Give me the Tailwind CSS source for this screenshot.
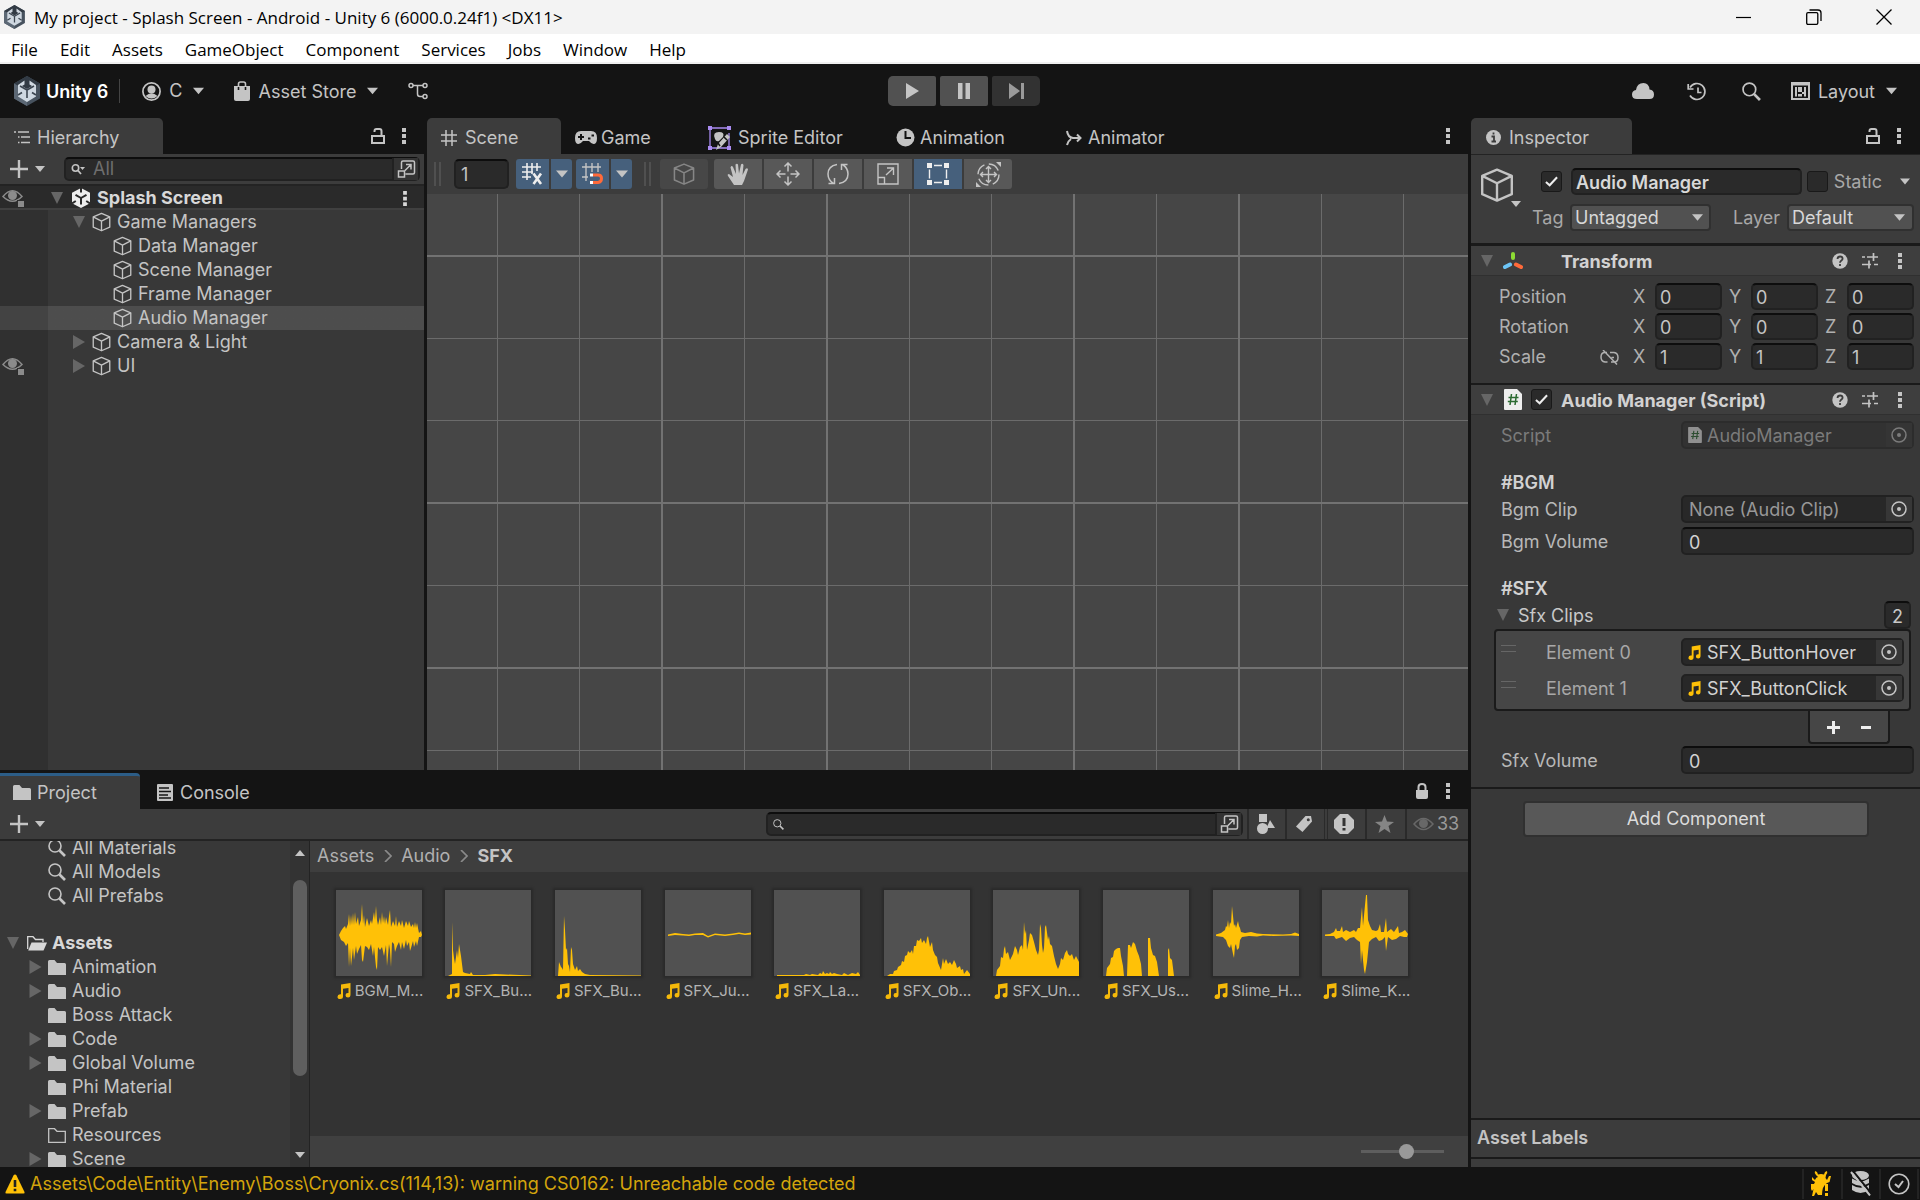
<!DOCTYPE html>
<html lang="en">
<head>
    <meta charset="UTF-8">
    <meta name="viewport" content="width=device-width, initial-scale=1.0">
    <title>My project - Splash Screen - Android - Unity 6</title>
    <script src="https://cdn.jsdelivr.net/npm/@tailwindcss/browser@4"></script>
</head>
<body class="h-screen flex flex-col overflow-hidden bg-[#141414] text-[#c4c4c4] text-[18px] leading-6 font-['Inter',sans-serif]">

    <!-- icon set -->
    <svg class="hidden">
        <symbol id="cube" viewBox="0 0 20 20"><path d="M10 1 18.7 4.6V15.4L10 19.2 1.3 15.4V4.6ZM1.3 4.6 10 9 18.7 4.6M10 9V19.2" fill="none" stroke="currentColor" stroke-width="1.4" stroke-linejoin="round"/></symbol>
        <symbol id="down" viewBox="0 0 10 6"><path d="M0 0H10L5 6Z" fill="currentColor"/></symbol>
        <symbol id="fold" viewBox="0 0 12 12"><path d="M0 0H12L6 12Z" fill="currentColor"/></symbol>
        <symbol id="unfold" viewBox="0 0 12 14"><path d="M0 0 12 7 0 14Z" fill="currentColor"/></symbol>
        <symbol id="dots" viewBox="0 0 4 16"><path d="M0 0H4V4H0ZM0 6H4V10H0ZM0 12H4V16H0Z" fill="currentColor"/></symbol>
        <symbol id="plus" viewBox="0 0 18 18"><path d="M9 0V18M0 9H18" stroke="currentColor" stroke-width="2.4"/></symbol>
        <symbol id="unlock" viewBox="0 0 14 16"><path d="M1 8H13V15H1ZM3.5 4V3Q3.5 1 5.5 1H8.5Q10.5 1 10.5 3V8" fill="none" stroke="currentColor" stroke-width="2"/></symbol>
        <symbol id="lock" viewBox="0 0 14 16"><path d="M1 7H13V14Q13 16 11 16H3Q1 16 1 14Z" fill="currentColor"/><path d="M3.5 8V4Q3.5 1 7 1T10.5 4V8" fill="none" stroke="currentColor" stroke-width="2"/></symbol>
        <symbol id="search" viewBox="0 0 18 18"><circle cx="7" cy="7" r="6" fill="none" stroke="currentColor" stroke-width="1.6"/><path d="M11.5 11.5 17 17" stroke="currentColor" stroke-width="2.6"/></symbol>
        <symbol id="popout" viewBox="0 0 18 18"><path d="M4 9V2.500Q4 1 5.500 1H15.500Q17 1 17 2.500V12.500Q17 14 15.500 14H8M1 11H7V17H1ZM7.500 10.500 13 5M8.500 4.500H13.500V9.500" fill="none" stroke="currentColor" stroke-width="1.5"/></symbol>
        <symbol id="eye" viewBox="0 0 22 18"><path d="M1 7.500Q10.500-4 20 7.500 10.500 17 1 7.500Z" fill="none" stroke="currentColor" stroke-width="1.5"/><circle cx="10.500" cy="6.500" r="4.500" fill="currentColor"/><path d="M15 11H22V18H15Z" fill="#2c2c2c"/><path d="M16 12H22V18H16Z" fill="currentColor"/></symbol>
        <symbol id="folder" viewBox="0 0 18 15"><path d="M0 1.500Q0 0 1.500 0H6.500L9 3H16.500Q18 3 18 4.500V15H0Z" fill="currentColor"/></symbol>
        <symbol id="folder-empty" viewBox="0 0 18 15"><path d="M.7 14.300V.7H6.500L9 3.300H17.300V14.300Z" fill="none" stroke="currentColor" stroke-width="1.300"/></symbol>
        <symbol id="note" viewBox="0 0 14 16"><path d="M4 1.500 13.500 0V11.500Q13.500 14.500 11 14.500T8.500 12.200 11 10H11.500V5L6 5.800V13.500Q6 16 3.200 16T.5 13.700 3 11.300H4Z" fill="currentColor"/></symbol>
        <symbol id="target" viewBox="0 0 16 16"><circle cx="8" cy="8" r="7" fill="none" stroke="currentColor" stroke-width="1.500"/><circle cx="8" cy="8" r="2" fill="currentColor"/></symbol>
        <symbol id="help" viewBox="0 0 16 16"><circle cx="8" cy="8" r="7.700" fill="currentColor"/><path d="M5.500 6Q5.700 3.500 8.100 3.500T10.600 5.700C10.600 7.500 8 7.500 8 9.700M8 11V13" fill="none" stroke="#3c3c3c" stroke-width="1.800"/></symbol>
        <symbol id="preset" viewBox="0 0 16 16"><path d="M0 4H3M5 4H16M11.500 0V8M0 11.500H9M12 11.500H16M7 7.500V15.500" stroke="currentColor" stroke-width="1.700"/></symbol>
        <symbol id="check" viewBox="0 0 14 11"><path d="M1 6 5 9.500 13 1" fill="none" stroke="#eee" stroke-width="2.200"/></symbol>
        <symbol id="hash-file" viewBox="0 0 18 21"><path d="M0 1Q0 0 1 0H13L18 5V20Q18 21 17 21H1Q0 21 0 20Z" fill="#eee"/><path d="M7.500 5 6 16M12.500 5 11 16M4.500 8.500H14.500M3.800 12.500H13.800" stroke="#2c6b32" stroke-width="1.500"/></symbol>
        <symbol id="unity" viewBox="0 0 18 20"><path d="M9 0 18 4.800V15.200L9 20 0 15.200V4.800Z" fill="#eee"/><path d="M9 10V16.500M9 10 3.500 6.800M9 10 14.500 6.800M9 0V4.500M0 15.500 3.800 13M18 15.500 14.200 13" stroke="#2a2a2a" stroke-width="2"/></symbol>
        <symbol id="unity-hex" viewBox="0 0 26 30"><path d="M13 0 26 7.500V22.500L13 30 0 22.500V7.500Z" fill="#47525e"/><path d="M13 0 26 7.500 13 15 0 7.500Z" fill="#323b45"/><path d="M13 15V30L0 22.500V7.500Z" fill="#5c6875"/><path d="M10.500 4.500 4 9V20.500L13 26 22 20.500V9L15.500 4.500V8.500L18 10 13 13 8 10 10.500 8.500Z" fill="#cfd8e1"/><path d="M13 13V22M13 14 6 10M13 14 20 10M4 19 8 16.500M22 19 18 16.500" stroke="#3b4550" stroke-width="1.600"/></symbol>
    </svg>

    <!-- window title bar -->
    <header class="h-[34px] shrink-0 flex items-center bg-[#f3f3f3] text-black pl-[4px] pr-[28px] font-['Open_Sans',sans-serif] text-[17px]">
        <svg class="w-[21px] h-[24px] mr-[9px]"><use href="#unity-hex"/></svg>
        <span class="pt-px">My project - Splash Screen - Android - Unity 6 (6000.0.24f1) &lt;DX11&gt;</span>
        <div class="ml-auto flex items-center gap-[54px]">
            <button aria-label="Minimize"><svg class="w-4 h-4" viewBox="0 0 16 16"><path d="M0 8.500H15" stroke="#000" stroke-width="1.200"/></svg></button>
            <button aria-label="Restore"><svg class="w-4 h-4" viewBox="0 0 16 16"><path d="M.7 5Q.7 3.700 2 3.700H10.500Q11.800 3.700 11.800 5V14Q11.800 15.300 10.500 15.300H2Q.7 15.300.7 14ZM3.500 1H12Q15 1 15 4V12" fill="none" stroke="#000" stroke-width="1.300"/></svg></button>
            <button aria-label="Close"><svg class="w-4 h-4" viewBox="0 0 16 16"><path d="M.5.5 15.500 15.500M15.500.5.5 15.500" stroke="#000" stroke-width="1.300"/></svg></button>
        </div>
    </header>
    <nav class="h-[30px] shrink-0 flex items-center gap-[22px] pl-[11px] pt-[3px] bg-white border-b-2 border-[#f0f0f0] text-black font-['Open_Sans',sans-serif] text-[17px]">
        <button>File</button>
        <button>Edit</button>
        <button>Assets</button>
        <button>GameObject</button>
        <button>Component</button>
        <button>Services</button>
        <button>Jobs</button>
        <button>Window</button>
        <button>Help</button>
    </nav>

    <!-- main toolbar -->
    <div class="h-[54px] shrink-0 grid grid-cols-[1fr_auto_1fr] items-center pl-[14px] pr-[6px]">
        <div class="flex items-center">
            <svg class="w-[26px] h-[30px]"><use href="#unity-hex"/></svg>
            <span class="ml-[6px] pt-px font-semibold text-white">Unity 6</span>
            <div class="w-px h-6 bg-[#444] ml-[11px] mr-[22px]"></div>
            <button class="flex items-center">
                <svg class="w-[19px] h-[19px] mr-[8px]" viewBox="0 0 19 19"><circle cx="9.500" cy="9.500" r="8.600" fill="none" stroke="currentColor" stroke-width="1.700"/><circle cx="9.500" cy="7.500" r="4" fill="currentColor"/><path d="M3.500 14Q9.500 8.500 15.500 14 9.500 19 3.500 14Z" fill="currentColor"/></svg>
                C
                <svg class="w-[11px] h-[8px] ml-[10px]"><use href="#down"/></svg>
            </button>
            <button class="flex items-center ml-[30px]">
                <svg class="w-[16px] h-[20px] mr-[9px]" viewBox="0 0 16 20"><path d="M0 5H16V18Q16 20 14 20H2Q0 20 0 18Z" fill="currentColor"/><path d="M4.500 9V3Q4.500 1 6.500 1H9.500Q11.500 1 11.500 3V9" fill="none" stroke="currentColor" stroke-width="1.600"/><path d="M4.500 6V9M11.500 6V9" stroke="#141414" stroke-width="1.600"/></svg>
                <span class="pt-px">Asset Store</span>
                <svg class="w-[11px] h-[8px] ml-[11px]"><use href="#down"/></svg>
            </button>
            <button aria-label="Version control" class="ml-[30px]"><svg class="w-[20px] h-[18px]" viewBox="0 0 20 18"><g fill="none" stroke="currentColor" stroke-width="1.500"><circle cx="3" cy="3.500" r="2"/><circle cx="17" cy="3.500" r="2"/><circle cx="17" cy="14.500" r="2"/><path d="M5 3.500H15M9.500 3.500V12Q9.500 14.500 12 14.500H15"/></g></svg></button>
        </div>
        <div class="flex gap-[4px]">
            <button aria-label="Play" class="w-[48px] h-[30px] flex items-center justify-center bg-[#515151] rounded-l-[5px] rounded-r-[2px]"><svg class="w-[13px] h-[16px]" viewBox="0 0 13 16"><path d="M0 0 13 8 0 16Z" fill="currentColor"/></svg></button>
            <button aria-label="Pause" class="w-[48px] h-[30px] flex items-center justify-center bg-[#515151] rounded-[2px]"><svg class="w-[12px] h-[16px]" viewBox="0 0 12 16"><path d="M0 0H4.500V16H0ZM7.500 0H12V16H7.500Z" fill="currentColor"/></svg></button>
            <button aria-label="Step" class="w-[48px] h-[30px] flex items-center justify-center bg-[#323232] text-[#9a9a9a] rounded-l-[2px] rounded-r-[5px]"><svg class="w-[15px] h-[16px]" viewBox="0 0 15 16"><path d="M0 0 11 8 0 16ZM12 0H15V16H12Z" fill="currentColor"/></svg></button>
        </div>
        <div class="flex items-center justify-end pr-[17px]">
            <button aria-label="Cloud"><svg class="w-[22px] h-[16px]" viewBox="0 0 22 16"><path d="M5 16Q0 16 0 11.500 0 7.500 4 7 5 0 11.500 0 17 0 17.500 6.500 22 7 22 11.500 22 16 17.500 16Z" fill="currentColor"/></svg></button>
            <button aria-label="Undo history" class="ml-[33px]"><svg class="w-[20px] h-[19px]" viewBox="0 0 20 19"><path d="M3 5.500A8 8 0 1 1 3 13.500M1.200 2V7H6.500M11 5.500V10.500H14.500" fill="none" stroke="currentColor" stroke-width="1.700"/></svg></button>
            <button aria-label="Search" class="ml-[35px]"><svg class="w-[19px] h-[19px]"><use href="#search"/></svg></button>
            <button class="flex items-center ml-[30px]">
                <svg class="w-[19px] h-[18px] mr-[8px]" viewBox="0 0 19 18"><path d="M0 0H19V18H0Z" fill="currentColor"/><path d="M2 3.500H17V16H2Z" fill="#141414"/><path d="M4 5H6V14.500H4ZM7 5H11V10H7ZM7 12H11V14.500H7ZM13 5H15V14.500H13ZM11 10H13V12H11Z" fill="currentColor"/></svg>
                <span class="pt-px">Layout</span>
                <svg class="w-[11px] h-[8px] ml-[11px]"><use href="#down"/></svg>
            </button>
        </div>
    </div>

    <main class="flex-1 min-h-0 flex gap-[3px]">
        <div class="flex-1 min-w-0 flex flex-col">
            <div class="flex-1 min-h-0 flex gap-[3px]">

                <!-- hierarchy -->
                <section class="w-[424px] shrink-0 flex flex-col">
                    <div class="h-[36px] shrink-0 flex items-center">
                        <button class="w-[163px] h-[36px] flex items-center pl-[14px] pt-[3px] gap-[7px] bg-[#3c3c3c] rounded-tr-[5px]">
                            <svg class="w-[16px] h-[13px]" viewBox="0 0 16 13"><path d="M0 1H2M4 1H15M4 6H5.500M7 6H16M4 11.500H5.500M7 11.500H16" stroke="currentColor" stroke-width="1.700"/></svg>
                            Hierarchy
                        </button>
                        <button aria-label="Lock" class="ml-auto"><svg class="w-[14px] h-[16px]"><use href="#unlock"/></svg></button>
                        <button aria-label="Menu" class="ml-[17px] mr-[18px]"><svg class="w-[4px] h-[16px]"><use href="#dots"/></svg></button>
                    </div>
                    <div class="h-[32px] shrink-0 flex items-center bg-[#3c3c3c] border-b-2 border-[#232323] pl-[10px] pr-[4px]">
                        <button aria-label="Create" class="flex items-center gap-[7px]"><svg class="w-[18px] h-[18px]"><use href="#plus"/></svg><svg class="w-[10px] h-[6px]"><use href="#down"/></svg></button>
                        <div class="ml-[19px] flex-1 h-[24px] flex items-center bg-[#2a2a2a] border-2 border-t-[#0d0d0d] border-[#212121] rounded-[5px]">
                            <svg class="w-[14px] h-[11px] ml-[5px]" viewBox="0 0 14 11"><circle cx="4.500" cy="4" r="3.200" fill="none" stroke="currentColor" stroke-width="1.600"/><path d="M7 6.500 10 10" stroke="currentColor" stroke-width="1.800"/><path d="M9 3H14L11.500 6Z" fill="currentColor"/></svg>
                            <input type="text" aria-label="Search hierarchy" placeholder="All" class="flex-1 min-w-0 ml-[8px] bg-transparent outline-none placeholder:text-[#6e6e6e]">
                            <button aria-label="Open search window" class="w-[26px] h-[22px] flex items-center justify-center bg-[#333] border-l-2 border-[#212121]"><svg class="w-[19px] h-[18px]"><use href="#popout"/></svg></button>
                        </div>
                    </div>
                    <div class="h-[24px] shrink-0 flex items-center bg-[#2a2a2a] border-b-2 border-[#404040] pl-[2px] pt-[2px] font-bold text-[#d8d8d8]">
                        <svg class="w-[22px] h-[18px] text-[#8b8b8b]"><use href="#eye"/></svg>
                        <svg class="w-[12px] h-[12px] ml-[27px] mr-[9px] text-[#666]"><use href="#fold"/></svg>
                        <svg class="w-[18px] h-[20px] mr-[7px]"><use href="#unity"/></svg>
                        Splash Screen
                        <svg class="w-[4px] h-[15px] ml-auto mr-[17px]"><use href="#dots"/></svg>
                    </div>
                    <div class="flex-1 min-h-0 bg-linear-to-r from-[#303030] from-[48px] to-[#383838] to-[48px]">
                        <ul>
                            <li class="h-[24px] flex items-center pl-[73px]"><svg class="w-[12px] h-[12px] mr-[7px] text-[#666]"><use href="#fold"/></svg><svg class="w-[19px] h-[20px] mr-[6px]"><use href="#cube"/></svg>Game Managers</li>
                            <li class="h-[24px] flex items-center pl-[113px]"><svg class="w-[19px] h-[20px] mr-[6px]"><use href="#cube"/></svg>Data Manager</li>
                            <li class="h-[24px] flex items-center pl-[113px]"><svg class="w-[19px] h-[20px] mr-[6px]"><use href="#cube"/></svg>Scene Manager</li>
                            <li class="h-[24px] flex items-center pl-[113px]"><svg class="w-[19px] h-[20px] mr-[6px]"><use href="#cube"/></svg>Frame Manager</li>
                            <li class="h-[24px] flex items-center pl-[113px] bg-linear-to-r from-[#434343] from-[48px] to-[#4d4d4d] to-[48px]"><svg class="w-[19px] h-[20px] mr-[6px]"><use href="#cube"/></svg>Audio Manager</li>
                            <li class="h-[24px] flex items-center pl-[73px]"><svg class="w-[12px] h-[14px] mr-[7px] text-[#666]"><use href="#unfold"/></svg><svg class="w-[19px] h-[20px] mr-[6px]"><use href="#cube"/></svg>Camera &amp; Light</li>
                            <li class="h-[24px] flex items-center pl-[2px]"><svg class="w-[22px] h-[18px] mr-[49px] text-[#8b8b8b]"><use href="#eye"/></svg><svg class="w-[12px] h-[14px] mr-[7px] text-[#666]"><use href="#unfold"/></svg><svg class="w-[19px] h-[20px] mr-[6px]"><use href="#cube"/></svg>UI</li>
                        </ul>
                    </div>
                </section>

                <!-- scene view -->
                <section class="flex-1 min-w-0 flex flex-col">
                    <div class="h-[36px] shrink-0 flex items-center">
                        <button class="w-[134px] h-[36px] flex items-center gap-[8px] pl-[14px] pt-[3px] bg-[#3c3c3c] rounded-t-[5px]"><svg class="w-[16px] h-[16px]" viewBox="0 0 16 16"><path d="M5 0V16M11 0V16M0 5H16M0 11H16" stroke="currentColor" stroke-width="1.500"/></svg>Scene</button>
                        <button class="w-[133px] h-[36px] flex items-center gap-[4px] pl-[14px] pt-[3px]"><svg class="w-[22px] h-[13px]" viewBox="0 0 22 13"><path d="M6 0H16Q22 0 22 7 22 13 18.500 13 16.500 13 14 10H8Q5.500 13 3.500 13 0 13 0 7 0 0 6 0Z" fill="currentColor"/><path d="M6 3V9M3 6H9M13 7.500H15.500M16.500 4.500H19" stroke="#141414" stroke-width="2"/></svg>Game</button>
                        <button class="w-[189px] h-[36px] flex items-center gap-[6px] pl-[13px] pt-[3px]"><svg class="w-[25px] h-[26px]" viewBox="0 0 25 26"><path d="M3 3H22M3 3V23M3 23H22M22 8V23" stroke="#a98bf0" stroke-width="1.300" fill="none"/><path d="M1 1H5V5H1ZM20 1H24V5H20ZM1 21H5V25H1ZM20 21H24V25H20Z" fill="#a98bf0"/><path d="M8 14Q5 7 12 7 18 7 16 12L12 16Q9 17 8 14ZM20 9 23 12 14 22 9 25 11 19Z" fill="currentColor"/><path d="M17 12 20 15M11 18 13 21" stroke="#141414" stroke-width="1.500"/></svg>Sprite Editor</button>
                        <button class="w-[169px] h-[36px] flex items-center gap-[5px] pl-[13px] pt-[3px]"><svg class="w-[19px] h-[19px]" viewBox="0 0 19 19"><circle cx="9.500" cy="9.500" r="9" fill="currentColor"/><path d="M9.500 3V10H15" fill="none" stroke="#141414" stroke-width="2"/></svg>Animation</button>
                        <button class="h-[36px] flex items-center gap-[6px] pl-[14px] pt-[3px]"><svg class="w-[16px] h-[16px]" viewBox="0 0 16 16"><path d="M1 1Q2 7.500 7 8H14M1 15Q2 11 5 9M11 4.500 14.500 8 11 11.500" fill="none" stroke="currentColor" stroke-width="2"/></svg>Animator</button>
                        <button aria-label="Menu" class="ml-auto mr-[18px]"><svg class="w-[4px] h-[16px]"><use href="#dots"/></svg></button>
                    </div>
                    <div class="h-[40px] shrink-0 flex items-center bg-[#3c3c3c] pl-[7px]">
                        <div class="w-[7px] h-[24px] border-x-2 border-[#505050]"></div>
                        <input type="text" aria-label="Grid size" value="1" class="w-[55px] h-[30px] ml-[13px] pl-[5px] pt-px bg-[#2a2a2a] border-2 border-[#212121] border-t-[#0d0d0d] rounded-[5px] outline-none">
                        <div class="flex gap-[2px] ml-[7px] text-[#eee]">
                            <button aria-label="Grid axis" class="w-[33px] h-[30px] flex items-center justify-center bg-[#46607c] rounded-l-[3px]"><svg class="w-[21px] h-[22px]" viewBox="0 0 21 22"><path d="M5 0V17M10 0V11M15 0V8M0 4H19M0 9H11M0 14H9" stroke="currentColor" stroke-width="1.600"/><path d="M11.500 10.500 19 21M19 10.500 11.500 21" stroke="currentColor" stroke-width="2.600"/></svg></button>
                            <button aria-label="Grid options" class="w-[21px] h-[30px] flex items-center justify-center bg-[#46607c] rounded-r-[3px] text-[#c4c4c4]"><svg class="w-[12px] h-[8px]"><use href="#down"/></svg></button>
                        </div>
                        <div class="flex gap-[2px] ml-[4px]">
                            <button aria-label="Snap" class="w-[33px] h-[30px] flex items-center justify-center bg-[#46607c] rounded-l-[3px]"><svg class="w-[21px] h-[22px]" viewBox="0 0 21 22"><path d="M4 0V18M10 0V9M16 0V9M0 4H19M0 14H6" stroke="currentColor" stroke-width="1.400"/><path d="M11 12H16Q19.500 12 19.500 15.500T16 19.500H11" fill="none" stroke="#ff6a3a" stroke-width="3"/><path d="M8 10.500H11V13.500H8ZM8 18H11V21H8Z" fill="#fff"/></svg></button>
                            <button aria-label="Snap options" class="w-[21px] h-[30px] flex items-center justify-center bg-[#46607c] rounded-r-[3px]"><svg class="w-[12px] h-[8px]"><use href="#down"/></svg></button>
                        </div>
                        <div class="w-[7px] h-[24px] ml-[12px] border-x-2 border-[#505050]"></div>
                        <button aria-label="View mode" class="w-[48px] h-[30px] ml-[9px] flex items-center justify-center bg-[#474747] text-[#868686] rounded-[3px]"><svg class="w-[22px] h-[22px]"><use href="#cube"/></svg></button>
                        <div class="flex gap-[2px] ml-[6px]">
                            <button aria-label="Hand" class="w-[48px] h-[30px] flex items-center justify-center bg-[#585858] rounded-l-[3px]"><svg class="w-[22px] h-[23px]" viewBox="0 0 22 23"><path d="M7 22 1 13Q0 11 2 11L6 14 3.500 4.500Q4.500 2 6 4L9 11 8.500 1.500Q10 0 11 1.500L12 10.500 14 1.500Q15.500 0 16.500 2L15.500 12 18.500 6Q20.500 4.500 21 6.500L17 18 15 22Z" fill="currentColor"/></svg></button>
                            <button aria-label="Move" class="w-[48px] h-[30px] flex items-center justify-center bg-[#585858]"><svg class="w-[24px] h-[24px]" viewBox="0 0 24 24"><path d="M12 1V9.500M12 14.500V23M1 12H9.500M14.500 12H23M8.500 4.500 12 1 15.500 4.500M8.500 19.500 12 23 15.500 19.500M4.500 8.500 1 12 4.500 15.500M19.500 8.500 23 12 19.500 15.500" fill="none" stroke="currentColor" stroke-width="1.500"/></svg></button>
                            <button aria-label="Rotate" class="w-[48px] h-[30px] flex items-center justify-center bg-[#585858]"><svg class="w-[22px] h-[22px]" viewBox="0 0 22 22"><path d="M10 1.500Q1 3 1 11 1 17 6.500 20.500M12 20.500Q21 19 21 11 21 5 15.500 1.500M7.500 15V20.500H1.500M14.500 7V1.500H20.500" fill="none" stroke="currentColor" stroke-width="1.500"/></svg></button>
                            <button aria-label="Scale" class="w-[48px] h-[30px] flex items-center justify-center bg-[#585858]"><svg class="w-[22px] h-[22px]" viewBox="0 0 22 22"><path d="M1 1H21V21H1ZM1 14.500H7.500V21M9 12 16 5.500M10 5H16.500V12" fill="none" stroke="currentColor" stroke-width="1.400"/></svg></button>
                            <button aria-label="Rect" class="w-[48px] h-[30px] flex items-center justify-center bg-[#46607c] text-[#eee]"><svg class="w-[22px] h-[22px]" viewBox="0 0 22 22"><path d="M7 2.500H15M7 19.500H15M2.500 6.500V15.500M19.500 6.500V15.500" stroke="currentColor" stroke-width="1.400"/><path d="M0 0H5V5H0ZM17 0H22V5H17ZM0 17H5V22H0ZM17 17H22V22H17Z" fill="currentColor"/></svg></button>
                            <button aria-label="Transform" class="w-[48px] h-[30px] flex items-center justify-center bg-[#585858] rounded-r-[3px]"><svg class="w-[25px] h-[25px]" viewBox="0 0 25 25"><g fill="none" stroke="currentColor" stroke-width="1.400"><circle cx="12.500" cy="12.500" r="10.500" stroke-dasharray="12 4.500"/><path d="M12.500 4.500V20.500M4.500 12.500H20.500M10 7 12.500 4.500 15 7M10 18 12.500 20.500 15 18M7 10 4.500 12.500 7 15M18 10 20.500 12.500 18 15"/></g><path d="M20 0H25V5ZM0 20V25H5Z" fill="currentColor"/></svg></button>
                        </div>
                    </div>
                    <div class="flex-1 min-h-0 bg-[#464646]">
                        <!-- scene grid: minor lines, then major ones -->
                        <svg class="w-full h-full" shape-rendering="crispEdges">
                            <path d="M70.500 0V2000M152.500 0V2000M317.500 0V2000M482.500 0V2000M564.500 0V2000M729.500 0V2000M894.500 0V2000M976.500 0V2000M0 144.500H4000M0 226.500H4000M0 391.500H4000M0 556.500H4000" stroke="#6b6b6b" stroke-width="1"/>
                            <path d="M235 0V2000M400 0V2000M647 0V2000M812 0V2000M0 62H4000M0 309H4000M0 474H4000" stroke="#727272" stroke-width="2"/>
                        </svg>
                    </div>
                </section>
            </div>

            <!-- project browser -->
            <section class="h-[397px] shrink-0 flex flex-col pt-[3px]">
                <div class="h-[36px] shrink-0 flex items-center">
                    <button class="w-[140px] h-[36px] flex items-center gap-[6px] pl-[13px] bg-[#3c3c3c] border-t-3 border-[#2c5d87] rounded-tr-[4px]"><svg class="w-[18px] h-[15px]"><use href="#folder"/></svg>Project</button>
                    <button class="h-[36px] flex items-center gap-[7px] pl-[17px] pt-[3px]"><svg class="w-[16px] h-[17px]" viewBox="0 0 16 17"><rect width="16" height="17" rx="1" fill="currentColor"/><path d="M2 4H12M2 7.500H14M2 11H11M2 14H14" stroke="#141414" stroke-width="1.400"/></svg>Console</button>
                    <button aria-label="Lock" class="ml-auto"><svg class="w-[14px] h-[16px]"><use href="#lock"/></svg></button>
                    <button aria-label="Menu" class="ml-[17px] mr-[18px]"><svg class="w-[4px] h-[16px]"><use href="#dots"/></svg></button>
                </div>
                <div class="h-[32px] shrink-0 flex items-center bg-[#3c3c3c] border-b-2 border-[#232323] pl-[10px]">
                    <button aria-label="Create" class="flex items-center gap-[7px]"><svg class="w-[18px] h-[18px]"><use href="#plus"/></svg><svg class="w-[10px] h-[6px]"><use href="#down"/></svg></button>
                    <div class="ml-auto w-[477px] h-[24px] flex items-center bg-[#2a2a2a] border-2 border-[#212121] border-t-[#0d0d0d] rounded-[5px]">
                        <svg class="w-[11px] h-[11px] ml-[5px]"><use href="#search"/></svg>
                        <input type="text" aria-label="Search project" class="flex-1 min-w-0 ml-[8px] bg-transparent outline-none">
                        <button aria-label="Open search window" class="w-[26px] h-[22px] flex items-center justify-center bg-[#333] border-l-2 border-[#212121]"><svg class="w-[19px] h-[18px]"><use href="#popout"/></svg></button>
                    </div>
                    <button aria-label="Search by type" class="w-[38px] h-[30px] ml-[4px] pr-[3px] flex items-center justify-center border-l-2 border-[#2a2a2a]"><svg class="w-[18px] h-[20px]" viewBox="0 0 18 20"><path d="M2 0H10V8H2ZM13 6 18 14H9.500Z" fill="currentColor"/><circle cx="5.500" cy="14.500" r="5.500" fill="currentColor"/></svg></button>
                    <button aria-label="Search by label" class="w-[39px] h-[30px] pr-[3px] flex items-center justify-center border-l-2 border-[#2a2a2a]"><svg class="w-[16px] h-[16px]" viewBox="0 0 16 16"><path d="M9.500 0H15L16 5.500 6.500 16 0 10.500Z" fill="currentColor"/><circle cx="12.300" cy="3.800" r="1.500" fill="#3c3c3c"/></svg></button>
                    <button aria-label="Log filter" class="w-[41px] h-[30px] pr-[5px] flex items-center justify-center border-l-4 border-double border-[#2a2a2a]"><svg class="w-[20px] h-[20px]" viewBox="0 0 20 20"><path d="M6 0H14L20 6V14L14 20H6L0 14V6Z" fill="currentColor"/><path d="M10 4V12M10 14V16.500" stroke="#333" stroke-width="3"/></svg></button>
                    <button aria-label="Favorites" class="w-[40px] h-[30px] pr-[3px] flex items-center justify-center border-l-2 border-[#2a2a2a] text-[#858585]"><svg class="w-[19px] h-[18px]" viewBox="0 0 19 18"><path d="M9.500 0 12 6.500 19 7 13.500 11 15.500 18 9.500 14 3.500 18 5.500 11 0 7 7 6.500Z" fill="currentColor"/></svg></button>
                    <button class="w-[63px] h-[30px] flex items-center pl-[6px] gap-[3px] border-l-2 border-[#2a2a2a] text-[#9a9a9a]"><svg class="w-[21px] h-[14px] text-[#686868]" viewBox="0 0 21 14"><path d="M1 7Q10.500-4 20 7 10.500 18 1 7Z" fill="none" stroke="currentColor" stroke-width="1.500"/><circle cx="10.500" cy="6.500" r="4.500" fill="currentColor"/></svg>33</button>
                </div>
                <div class="flex-1 min-h-0 flex">
                    <div class="w-[290px] shrink-0 overflow-hidden bg-[#383838]">
                        <ul class="-mt-[5px]">
                            <li class="h-[24px] flex items-center gap-[6px] pl-[48px]"><svg class="w-[18px] h-[18px]"><use href="#search"/></svg>All Materials</li>
                            <li class="h-[24px] flex items-center gap-[6px] pl-[48px]"><svg class="w-[18px] h-[18px]"><use href="#search"/></svg>All Models</li>
                            <li class="h-[24px] flex items-center gap-[6px] pl-[48px]"><svg class="w-[18px] h-[18px]"><use href="#search"/></svg>All Prefabs</li>
                        </ul>
                        <ul class="mt-[23px]">
                            <li class="h-[24px] flex items-center pl-[7px] font-bold text-[#d8d8d8]"><svg class="w-[12px] h-[12px] text-[#666]"><use href="#fold"/></svg><svg class="w-[20px] h-[15px] ml-[8px] mr-[5px]" viewBox="0 0 20 15"><path d="M.7 13V.7H6L8.500 3.500H16V6" fill="none" stroke="currentColor" stroke-width="1.300"/><path d="M4.500 6.500H20L16.500 14.500H1.200Z" fill="currentColor"/></svg>Assets</li>
                            <li class="h-[24px] flex items-center gap-[6px] pl-[29px]"><svg class="w-[13px] h-[14px] text-[#666]"><use href="#unfold"/></svg><svg class="w-[18px] h-[15px]"><use href="#folder"/></svg>Animation</li>
                            <li class="h-[24px] flex items-center gap-[6px] pl-[29px]"><svg class="w-[13px] h-[14px] text-[#666]"><use href="#unfold"/></svg><svg class="w-[18px] h-[15px]"><use href="#folder"/></svg>Audio</li>
                            <li class="h-[24px] flex items-center gap-[6px] pl-[48px]"><svg class="w-[18px] h-[15px]"><use href="#folder"/></svg>Boss Attack</li>
                            <li class="h-[24px] flex items-center gap-[6px] pl-[29px]"><svg class="w-[13px] h-[14px] text-[#666]"><use href="#unfold"/></svg><svg class="w-[18px] h-[15px]"><use href="#folder"/></svg>Code</li>
                            <li class="h-[24px] flex items-center gap-[6px] pl-[29px]"><svg class="w-[13px] h-[14px] text-[#666]"><use href="#unfold"/></svg><svg class="w-[18px] h-[15px]"><use href="#folder"/></svg>Global Volume</li>
                            <li class="h-[24px] flex items-center gap-[6px] pl-[48px]"><svg class="w-[18px] h-[15px]"><use href="#folder"/></svg>Phi Material</li>
                            <li class="h-[24px] flex items-center gap-[6px] pl-[29px]"><svg class="w-[13px] h-[14px] text-[#666]"><use href="#unfold"/></svg><svg class="w-[18px] h-[15px]"><use href="#folder"/></svg>Prefab</li>
                            <li class="h-[24px] flex items-center gap-[6px] pl-[48px]"><svg class="w-[18px] h-[15px]"><use href="#folder-empty"/></svg>Resources</li>
                            <li class="h-[24px] flex items-center gap-[6px] pl-[29px]"><svg class="w-[13px] h-[14px] text-[#666]"><use href="#unfold"/></svg><svg class="w-[18px] h-[15px]"><use href="#folder"/></svg>Scene</li>
                        </ul>
                    </div>
                    <div class="w-[20px] shrink-0 flex flex-col items-center bg-[#333] border-r border-[#232323] pt-[9px] pb-[9px]">
                        <svg class="w-[10px] h-[6px] rotate-180"><use href="#down"/></svg>
                        <div class="w-[14px] h-[196px] mt-[24px] rounded-full bg-[#5f5f5f]"></div>
                        <svg class="w-[10px] h-[6px] mt-auto"><use href="#down"/></svg>
                    </div>
                    <div class="flex-1 min-w-0 flex flex-col bg-[#333]">
                        <div class="h-[31px] shrink-0 flex items-center gap-[9px] pl-[7px] pb-[2px] bg-[#3e3e3e] text-[#b0b0b0]">
                            <a href="#">Assets</a>
                            <svg class="w-[9px] h-[12px]" viewBox="0 0 9 12"><path d="M2 0 8 6 2 12" fill="none" stroke="#8a8a8a" stroke-width="1.700"/></svg>
                            <a href="#">Audio</a>
                            <svg class="w-[9px] h-[12px]" viewBox="0 0 9 12"><path d="M2 0 8 6 2 12" fill="none" stroke="#8a8a8a" stroke-width="1.700"/></svg>
                            <a href="#" class="font-bold text-[#c4c4c4]">SFX</a>
                        </div>
                        <div id="clips" class="flex-1 min-h-0 grid grid-cols-10 content-start justify-items-center pl-[14px] pr-[48px] pt-[18px] text-[15px] leading-5 text-[#b4b4b4]"></div>
                        <div class="h-[31px] shrink-0 flex items-center justify-end pr-[24px] bg-[#404040]">
                            <input type="range" aria-label="Thumbnail size" value="56" class="w-[83px] h-[3px] appearance-none bg-[#5e5e5e] [&::-webkit-slider-thumb]:appearance-none [&::-webkit-slider-thumb]:w-[15px] [&::-webkit-slider-thumb]:h-[15px] [&::-webkit-slider-thumb]:rounded-full [&::-webkit-slider-thumb]:bg-[#999]">
                        </div>
                    </div>
                </div>
            </section>
        </div>

        <!-- inspector -->
        <section class="w-[449px] shrink-0 flex flex-col bg-[#383838]">
            <div class="h-[36px] shrink-0 flex items-center bg-[#141414]">
                <button class="w-[161px] h-[36px] flex items-center gap-[8px] pl-[15px] pt-[3px] bg-[#3c3c3c] rounded-t-[5px]"><svg class="w-[15px] h-[15px]" viewBox="0 0 15 15"><circle cx="7.500" cy="7.500" r="7.500" fill="currentColor"/><path d="M7.500 2.500V4.500M5.500 6.500H8V11M5.500 11.500H10" fill="none" stroke="#3c3c3c" stroke-width="1.800"/></svg>Inspector</button>
                <button aria-label="Lock" class="ml-auto"><svg class="w-[14px] h-[16px]"><use href="#unlock"/></svg></button>
                <button aria-label="Menu" class="ml-[17px] mr-[19px]"><svg class="w-[4px] h-[16px]"><use href="#dots"/></svg></button>
            </div>

            <div class="h-[92px] shrink-0 flex bg-[#3c3c3c] border-t border-[#232323] pt-[13px] border-b-3 border-b-[#1a1a1a]">
                <div class="w-[61px] shrink-0 flex flex-col items-center pr-[1px]">
                    <button aria-label="Select icon" class="relative mr-[9px]"><svg class="w-[34px] h-[34px]"><use href="#cube"/></svg><svg class="w-[10px] h-[6px] absolute left-[31px] top-[33px]"><use href="#down"/></svg></button>
                </div>
                <div class="flex-1 min-w-0 flex flex-col gap-[9px] pr-[6px] text-[#a8a8a8]">
                    <div class="flex items-center pl-[9px]">
                        <label class="flex w-[21px] h-[21px] shrink-0 items-center justify-center bg-[#2a2a2a] border border-[#191919] rounded-[3px]"><input type="checkbox" aria-label="Active" checked class="peer sr-only"><svg class="w-[13px] h-[11px] hidden peer-checked:block"><use href="#check"/></svg></label>
                        <input type="text" aria-label="Name" value="Audio Manager" class="flex-1 min-w-0 h-[27px] ml-[9px] mr-[5px] pl-[3px] pt-[2px] bg-[#2a2a2a] border-2 border-[#212121] border-t-[#0d0d0d] rounded-[5px] outline-none font-semibold text-[#d8d8d8]">
                        <label class="flex items-center gap-[6px]"><input type="checkbox" class="appearance-none w-[21px] h-[21px] bg-[#2a2a2a] border border-[#191919] rounded-[3px]">Static</label>
                        <button aria-label="Static flags" class="ml-[18px] mr-[4px] text-[#c4c4c4]"><svg class="w-[10px] h-[7px]"><use href="#down"/></svg></button>
                    </div>
                    <div class="flex items-center">
                        <label for="tag" class="w-[38px] shrink-0">Tag</label>
                        <div class="relative w-[141px] shrink-0">
                            <select id="tag" class="appearance-none w-full h-[27px] pl-[3px] bg-[#515151] border-2 border-[#303030] rounded-[4px] text-[#d8d8d8] leading-[22px]"><option>Untagged</option></select>
                            <svg class="w-[11px] h-[7px] absolute right-[8px] top-[10px] text-[#c4c4c4] pointer-events-none"><use href="#down"/></svg>
                        </div>
                        <label for="layer" class="w-[54px] shrink-0 ml-[22px]">Layer</label>
                        <div class="relative flex-1 min-w-0">
                            <select id="layer" class="appearance-none w-full h-[27px] pl-[3px] bg-[#515151] border-2 border-[#303030] rounded-[4px] text-[#d8d8d8] leading-[22px]"><option>Default</option></select>
                            <svg class="w-[11px] h-[7px] absolute right-[9px] top-[10px] text-[#c4c4c4] pointer-events-none"><use href="#down"/></svg>
                        </div>
                    </div>
                </div>
            </div>

            <div class="h-[30px] shrink-0 flex items-center bg-[#3e3e3e] border-b border-[#303030] pl-[10px]">
                <svg class="w-[12px] h-[12px] text-[#666]"><use href="#fold"/></svg>
                <svg class="w-[20px] h-[18px] ml-[10px]" viewBox="0 0 20 18"><g stroke-width="4" stroke-linecap="round"><path d="M10 2V6" stroke="#8ddb34"/><path d="M7 12.500 2 15" stroke="#6cc4f5"/><path d="M13 12.500 18 15" stroke="#ff6a3a"/></g></svg>
                <h2 class="ml-[38px] pt-[2px] font-bold text-[#d2d2d2]">Transform</h2>
                <button aria-label="Help" class="ml-auto"><svg class="w-[16px] h-[16px]"><use href="#help"/></svg></button>
                <button aria-label="Presets" class="ml-[14px]"><svg class="w-[16px] h-[16px]"><use href="#preset"/></svg></button>
                <button aria-label="Menu" class="ml-[20px] mr-[18px]"><svg class="w-[4px] h-[16px]"><use href="#dots"/></svg></button>
            </div>
            <div id="transform" class="shrink-0 flex flex-col gap-[3px] pt-[7px] pb-[13px] pl-[28px] pr-[6px] text-[#b0b0b0] border-b-2 border-[#1a1a1a]"></div>

            <div class="h-[30px] shrink-0 flex items-center bg-[#3e3e3e] border-b border-[#303030] pl-[10px]">
                <svg class="w-[12px] h-[12px] text-[#666]"><use href="#fold"/></svg>
                <svg class="w-[18px] h-[21px] ml-[11px] mr-[9px]"><use href="#hash-file"/></svg>
                <label class="flex w-[21px] h-[21px] items-center justify-center bg-[#2a2a2a] border border-[#191919] rounded-[3px]"><input type="checkbox" aria-label="Script enabled" checked class="peer sr-only"><svg class="w-[13px] h-[11px] hidden peer-checked:block"><use href="#check"/></svg></label>
                <h2 class="ml-[9px] pt-[2px] font-bold text-[#d2d2d2]">Audio Manager (Script)</h2>
                <button aria-label="Help" class="ml-auto"><svg class="w-[16px] h-[16px]"><use href="#help"/></svg></button>
                <button aria-label="Presets" class="ml-[14px]"><svg class="w-[16px] h-[16px]"><use href="#preset"/></svg></button>
                <button aria-label="Menu" class="ml-[20px] mr-[18px]"><svg class="w-[4px] h-[16px]"><use href="#dots"/></svg></button>
            </div>
            <div class="shrink-0 flex flex-col pt-[6px] pb-[13px] pr-[6px] text-[#b8b8b8] border-b-2 border-[#1a1a1a]">
                <div class="flex items-center pl-[30px] text-[#7b7b7b]">
                    <span class="w-[180px] pt-px">Script</span>
                    <div class="flex-1 h-[28px] flex items-center pl-[5px] bg-[#323232] border-2 border-[#2c2c2c] rounded-[5px]"><svg class="w-[14px] h-[16px] mr-[5px] opacity-50"><use href="#hash-file"/></svg><span class="pt-[2px]">AudioManager</span><button aria-label="Pick script" class="ml-auto w-[26px] h-[24px] flex items-center justify-center bg-[#353535]"><svg class="w-[16px] h-[16px]"><use href="#target"/></svg></button></div>
                </div>
                <h3 class="mt-[22px] pl-[30px] font-semibold text-[#d2d2d2]">#BGM</h3>
                <div class="flex items-center pl-[30px]">
                    <span class="w-[180px] pt-px">Bgm Clip</span>
                    <div class="flex-1 h-[28px] flex items-center pl-[6px] bg-[#282828] border-2 border-[#212121] rounded-[5px] text-[#989898]"><span class="pt-[2px]">None (Audio Clip)</span><button aria-label="Pick bgm clip" class="ml-auto w-[26px] h-[24px] flex items-center justify-center bg-[#373737] text-[#c4c4c4]"><svg class="w-[16px] h-[16px]"><use href="#target"/></svg></button></div>
                </div>
                <div class="flex items-center pl-[30px] mt-[4px]">
                    <label for="bgm-volume" class="w-[180px] pt-px">Bgm Volume</label>
                    <input id="bgm-volume" type="text" value="0" class="flex-1 min-w-0 h-[28px] pl-[6px] pt-[2px] bg-[#2a2a2a] border-2 border-[#212121] border-t-[#0d0d0d] rounded-[5px] outline-none text-[#d2d2d2]">
                </div>
                <h3 class="mt-[22px] pl-[30px] font-semibold text-[#d2d2d2]">#SFX</h3>
                <div class="flex items-center pl-[26px] pr-[3px] text-[#c8c8c8]">
                    <svg class="w-[12px] h-[12px] mr-[9px] text-[#666]"><use href="#fold"/></svg><span class="pt-[2px]">Sfx Clips</span>
                    <input type="text" aria-label="Sfx clip count" value="2" class="w-[27px] h-[28px] ml-auto pt-[2px] bg-[#2a2a2a] border-2 border-[#212121] border-t-[#0d0d0d] rounded-[5px] outline-none text-center">
                </div>
                <div class="ml-[23px] mr-[3px] flex flex-col gap-[8px] py-[7px] pl-[5px] pr-[5px] bg-[#464646] border-2 border-[#1a1a1a] rounded-[4px] text-[#a8a8a8]">
                    <div class="flex items-center">
                        <div class="w-[15px] h-[7px] mb-[7px] border-y border-[#666]"></div>
                        <span class="w-[135px] ml-[30px] pt-px">Element 0</span>
                        <div class="flex-1 h-[28px] flex items-center pl-[5px] bg-[#282828] border-2 border-[#212121] rounded-[5px] text-[#d2d2d2]"><svg class="w-[13px] h-[15px] mr-[6px] text-[#ffc107]"><use href="#note"/></svg><span class="pt-[2px]">SFX_ButtonHover</span><button aria-label="Pick element 0" class="ml-auto w-[26px] h-[24px] flex items-center justify-center bg-[#373737] text-[#c4c4c4]"><svg class="w-[16px] h-[16px]"><use href="#target"/></svg></button></div>
                    </div>
                    <div class="flex items-center">
                        <div class="w-[15px] h-[7px] mb-[7px] border-y border-[#666]"></div>
                        <span class="w-[135px] ml-[30px] pt-px">Element 1</span>
                        <div class="flex-1 h-[28px] flex items-center pl-[5px] bg-[#282828] border-2 border-[#212121] rounded-[5px] text-[#d2d2d2]"><svg class="w-[13px] h-[15px] mr-[6px] text-[#ffc107]"><use href="#note"/></svg><span class="pt-[2px]">SFX_ButtonClick</span><button aria-label="Pick element 1" class="ml-auto w-[26px] h-[24px] flex items-center justify-center bg-[#373737] text-[#c4c4c4]"><svg class="w-[16px] h-[16px]"><use href="#target"/></svg></button></div>
                    </div>
                </div>
                <div class="w-[82px] h-[33px] ml-auto mr-[24px] flex items-center justify-center gap-[21px] pt-[2px] bg-[#464646] border-2 border-t-0 border-[#1a1a1a] rounded-b-[4px]">
                    <button aria-label="Add clip"><svg class="w-[13px] h-[13px]" viewBox="0 0 13 13"><path d="M6.500 0V13M0 6.500H13" stroke="#eee" stroke-width="3"/></svg></button>
                    <button aria-label="Remove clip"><svg class="w-[10px] h-[13px]" viewBox="0 0 10 13"><path d="M0 6.500H10" stroke="#eee" stroke-width="3"/></svg></button>
                </div>
                <div class="flex items-center pl-[30px] mt-[2px]">
                    <label for="sfx-volume" class="w-[180px] pt-px">Sfx Volume</label>
                    <input id="sfx-volume" type="text" value="0" class="flex-1 min-w-0 h-[28px] pl-[6px] pt-[2px] bg-[#2a2a2a] border-2 border-[#212121] border-t-[#0d0d0d] rounded-[5px] outline-none text-[#d2d2d2]">
                </div>
            </div>
            <button class="h-[36px] shrink-0 mt-[12px] ml-[52px] mr-[51px] bg-[#585858] border-2 border-[#303030] rounded-[4px] text-[#dcdcdc]">Add Component</button>

            <div class="mt-auto h-[41px] shrink-0 flex items-center pl-[6px] pb-[2px] bg-[#3c3c3c] border-y-2 border-[#1a1a1a] font-semibold text-[#c4c4c4]">Asset Labels</div>
            <div class="h-[8px] shrink-0 bg-[#3c3c3c]"></div>
        </section>
    </main>

    <!-- status bar -->
    <footer class="h-[33px] shrink-0 flex items-center pl-[5px] pr-[1px]">
        <svg class="w-[20px] h-[20px]" viewBox="0 0 20 20"><path d="M10 .5Q11 .5 11.500 1.500L19.500 18Q20 19.500 18.500 19.500H1.500Q0 19.500.5 18L8.500 1.500Q9 .5 10 .5Z" fill="#ffc107"/><path d="M10 6V13M10 14.800V17.300" stroke="#222" stroke-width="2.600"/></svg>
        <span class="ml-[5px] pt-px text-[#d3a40c]">Assets\Code\Entity\Enemy\Boss\Cryonix.cs(114,13): warning CS0162: Unreachable code detected</span>
        <button aria-label="Debugger" class="ml-auto w-[39px] h-[30px] pr-[4px] flex items-center justify-center border-l-2 border-[#232323]"><svg class="w-[20px] h-[25px]" viewBox="0 0 20 25"><path d="M4 9Q5 6 7 6L5 4Q3 2 4 0L6 1 7 3.500 10 3 13 3.500 14 1 16 0Q17 2 15 4L14.500 7 16 9 18 5H20L18.500 11 16 12Q11 15 11 24H7L5 21 3 25H1L2.500 18 1 20 0 18V13H3L4 11 1 9V6Z" fill="#ffc107"/><path d="M15.500 13V20M15.500 22V25" stroke="#ffc107" stroke-width="3"/></svg></button>
        <button aria-label="Cache server" class="w-[38px] h-[30px] pr-[2px] flex items-center justify-center border-l-2 border-[#232323]"><svg class="w-[21px] h-[25px]" viewBox="0 0 21 25"><ellipse cx="10.500" cy="4.500" rx="8.500" ry="4.500" fill="currentColor"/><path d="M2 7.500Q10.500 13 19 7.500V12Q10.500 17.500 2 12ZM2 14Q10.500 19.500 19 14V19Q10.500 25 2 19Z" fill="currentColor"/><path d="M3 0 21 22" stroke="#141414" stroke-width="2"/><path d="M1 1 20 24.500" stroke="currentColor" stroke-width="2"/></svg></button>
        <button aria-label="Background tasks" class="w-[40px] h-[30px] flex items-center justify-center border-x-2 border-[#232323]"><svg class="w-[22px] h-[22px]" viewBox="0 0 22 22"><circle cx="11" cy="11" r="9.800" fill="none" stroke="currentColor" stroke-width="1.600"/><path d="M7 11 10.500 14 15 8" fill="none" stroke="currentColor" stroke-width="2"/></svg></button>
    </footer>

    <script>
        // Waveform outlines on an 86x86 tile
        const clips = [
            ['BGM_M...', 'M3 45 5 41 7 38 9 36 10 39 12 34 13 24 14 36 15 25 16 35 17 23 18 35 19 22 20 34 22 27 23 36 25 30 26 14 27 34 28 25 29 37 31 28 33 36 35 30 36 34 38 22 39 30 40 16 41 30 42 35 44 27 45 35 46 22 47 33 48 26 49 34 50 27 52 35 53 26 54 20 55 37 57 31 59 36 60 26 61 37 63 31 65 36 66 30 68 38 70 31 72 36 73 31 75 37 77 34 78 38 79 32 80 38 81 33 83 43 85 41 86 45 85 47 83 47 81 56 80 51 78 57 77 51 75 58 74 61 73 52 71 56 70 50 68 59 66 52 65 60 63 52 61 56 59 62 58 54 56 52 55 77 54 60 53 54 51 76 50 55 48 66 46 57 44 60 42 57 41 80 40 77 38 57 37 66 35 54 33 60 31 57 29 56 27 72 26 70 25 55 23 59 21 64 20 56 18 70 17 58 15 76 14 58 13 77 12 53 10 56 8 52 5 50Z'],
            ['SFX_Bu...', 'M3 86 5 85 7 84 7 32 8 60 9 68 10 74 12 60 13 68 14 54 15 60 16 66 18 82 20 83 25 84 26 82 28 85 40 85 50 84 86 85.500V86Z'],
            ['SFX_Bu...', 'M3 86 4 72 6 77 7 78 8 80 9 26 10 40 11 60 12 58 13 74 14 76 15 82 16 57 17 60 18 74 20 80 22 76 23 81 25 79 27 82 30 84 35 85 86 85.500V86Z'],
            ['SFX_Ju...', 'M3 44.500 10 43 18 44 24 44.500 30 43.500 38 43 43 46 50 43.500 60 44.500 68 43.500 74 42.500 80 43.500 86 42.500V44.500L80 45 74 44 68 45 60 46 50 45 43 47.500 38 45 30 45 24 46 18 45.500 10 45 3 46Z'],
            ['SFX_La...', 'M3 86V85H30L32 84 36 85 38 84 44 85 46 83 48 84 49 81 51 84 53 83 55 84 56 82 58 84 60 83 63 84 68 85 70 83 74 85 78 83 82 84 84 82 86 85V86Z'],
            ['SFX_Ob...', 'M3 86 6 84 9 84 10 81 13 80 14 77 17 75 18 71 20 72 21 66 23 65 24 61 26 63 28 60 29 64 30 56 32 56 33 50 35 51 37 48 38 53 40 50 42 54 43 48 44 46 46 57 48 52 49 60 51 65 53 67 54 73 57 80 59 68 60 74 62 69 64 74 66 72 68 75 70 70 72 74 73 78 76 76 77 80 79 79 80 84 83 80 86 84V86Z'],
            ['SFX_Un...', 'M3 86 4 80 7 76 8 67 10 68 11 59 12 56 13 64 15 62 17 70 20 64 22 56 24 60 25 65 27 57 29 55 30 60 31 32 32 44 33 40 34 60 36 50 37 43 39 45 41 52 43 60 45 65 46 60 47 34 48 38 49 55 50 63 51 58 52 37 53 35 55 50 56 46 57 54 59 56 61 66 63 74 65 79 67 74 68 68 70 70 72 63 74 60 75 64 77 66 79 64 81 70 83 66 86 72V86Z'],
            ['SFX_Us...', 'M3 86 4 78 7 74 8 68 10 67 11 61 13 59 15 58 17 58 18 66 20 76 21 86ZM24 86 25 55 27 55 28 58 30 52 32 54 34 61 36 66 38 74 39 86ZM45 86V48H47L48 58 50 65 52 66 54 72 56 86ZM65 86V60L66 58 67 68 69 70 71 86Z'],
            ['Slime_H...', 'M3 44.500 8 43 12 40 13 36 14 37 15 30 16 38 17 32 18 34 19 16 20 26 21 36 22 34 23 38 25 31 26 36 27 38 28 42 32 43 38 42 44 43.500 50 44 70 44.500 78 44 82 42.500 86 44V46L78 45.500 60 46 50 45.500 44 46.500 36 46 29 47 27 50 26 58 24 60 23 54 22 56 21 68 20 64 18 54 17 58 15 56 13 50 10 47 3 46Z'],
            ['Slime_K...', 'M3 44.500 8 44 12 42 14 38 15 41 18 41 20 36 21 42 24 40 28 42 32 40 34 42 36 38 38 38 40 17 41 36 43 15 44 5 45 5 46 30 48 36 50 40 54 41 56 40 58 34 59 42 62 42 64 28 65 42 69 39 72 42 76 36 77 43 80 42 83 40 86 44 85 47 82 47 78 46 74 49 70 50 66 47 64 61 63 47 60 50 57 51 54 47 50 49 47 52 45 72 43 84 42 80 40 60 39 74 38 52 35 50 32 47 28 48 24 51 20 47 14 49 12 46 3 46Z']
        ];
        document.getElementById('clips').innerHTML = clips.map(([name, path]) => `
            <figure class="w-[86px]">
                <svg class="w-[86px] h-[86px] bg-[#515151] shadow-[0_0_2px_2px_#2a2a2a]" viewBox="0 0 86 86"><path d="${path}" fill="#ffc107"/></svg>
                <figcaption class="flex items-center gap-[4px] mt-[5px] pl-px whitespace-nowrap"><svg class="w-[14px] h-[16px] shrink-0 text-[#f5b90a]"><use href="#note"/></svg>${name}</figcaption>
            </figure>`).join('');

        const unlinked = '<svg class="w-[19px] h-[15px] ml-auto mr-[14px]" viewBox="0 0 19 15"><path d="M7 2.500H5Q1 2.500 1 7T5 12H7.500M11 12H14Q18 12 18 7.500T14 2.500H10M3 0 17 14.500M11.500 7.500H14" fill="none" stroke="currentColor" stroke-width="1.500"/></svg>';
        const rows = [['Position', 0], ['Rotation', 0], ['Scale', 1]];
        document.getElementById('transform').innerHTML = rows.map(([name, value]) => `
            <div class="flex items-center h-[27px]">
                <div class="w-[134px] shrink-0 pt-px flex items-center">${name}${name === 'Scale' ? unlinked : ''}</div>
                <div class="flex-1 min-w-0 flex gap-[7px]">
                    ${['X', 'Y', 'Z'].map(axis => `<label class="flex-1 min-w-0 flex items-center"><span class="w-[22px] shrink-0 pt-px">${axis}</span><input type="text" value="${value}" class="flex-1 min-w-0 h-[27px] pl-[3px] pt-px bg-[#2a2a2a] border-2 border-[#212121] border-t-[#0d0d0d] rounded-[5px] outline-none text-[#c4c4c4]"></label>`).join('')}
                </div>
            </div>`).join('');
    </script>
</body>
</html>
